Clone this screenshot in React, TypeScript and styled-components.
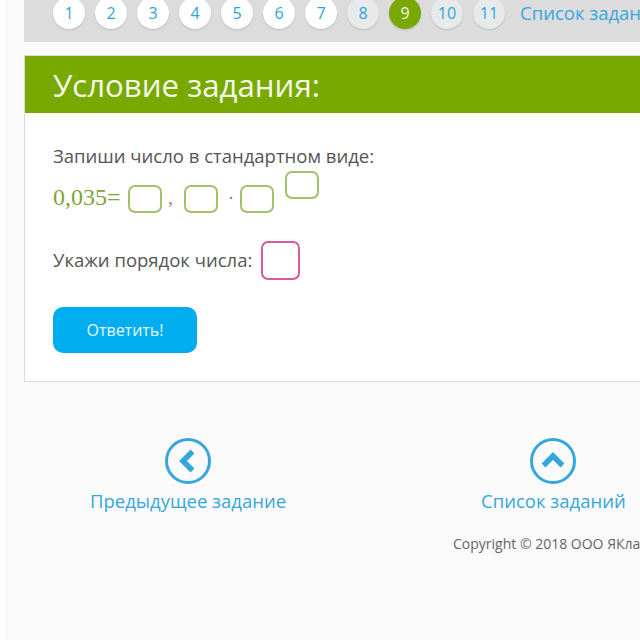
import React from "react";
import styled, { createGlobalStyle } from "styled-components";

const GlobalStyle = createGlobalStyle`
  html, body {
    margin: 0;
    padding: 0;
    width: 640px;
    height: 640px;
    overflow: hidden;
    background: #fff;
    font-family: "Open Sans", "Liberation Sans", sans-serif;
  }
`;

const Page = styled.div`
  width: 635px;
  height: 640px;
  margin-left: 5px;
  padding-left: 19px;
  box-sizing: border-box;
  background: #fafafa;
  overflow: hidden;
`;

const NavBar = styled.div`
  display: flex;
  align-items: flex-start;
  gap: 10px;
  width: 800px;
  height: 42px;
  padding: 0 0 0 29px;
  margin-bottom: 13px;
  box-sizing: border-box;
  background: #dcdcdc;
`;

const Bubble = styled.div<{ $state?: "done" | "todo" | "active" }>`
  flex: none;
  display: flex;
  align-items: center;
  justify-content: center;
  width: 32px;
  height: 32px;
  margin-top: -3px;
  border-radius: 50%;
  font-size: 16px;
  box-shadow: 0 1px 2px rgba(0, 0, 0, 0.15);
  color: ${(p) => (p.$state === "active" ? "#f1f6e2" : "#2ba6dc")};
  background: ${(p) =>
    p.$state === "active" ? "#78a900" : p.$state === "todo" ? "#e8e9ea" : "#fff"};
`;

const ListLink = styled.a`
  flex: none;
  margin-left: 5px;
  font-size: 18.5px;
  line-height: 25px;
  color: #36a7dc;
`;

const Card = styled.section`
  width: 800px;
  height: 327px;
  box-sizing: border-box;
  border: 1px solid #dcdcdc;
  background: #fff;
`;

const CardHeader = styled.h1`
  margin: 0;
  height: 57px;
  padding-left: 28px;
  background: #78a900;
  color: #f6f9ea;
  font-size: 31.2px;
  font-weight: 400;
  line-height: 58px;
`;

const CardBody = styled.div`
  padding: 30px 28px 0;
`;

const Prompt = styled.p`
  margin: 0;
  font-size: 18.5px;
  line-height: 26px;
  color: #555;
`;

const MathRow = styled.div`
  display: flex;
  align-items: flex-start;
  height: 56px;
  margin-top: 2px;
  box-sizing: border-box;
  font-family: "Liberation Serif", serif;
  font-size: 24px;
  color: #7aa63a;
`;

const MathText = styled.span`
  margin-top: 11px;
  line-height: 30px;
`;

const MathSign = styled.span<{ $padLeft?: number; $padRight?: number }>`
  width: 22px;
  box-sizing: border-box;
  padding-left: ${(p) => p.$padLeft ?? 0}px;
  padding-right: ${(p) => p.$padRight ?? 0}px;
  margin-top: 15px;
  text-align: center;
  font-size: 18px;
  line-height: 24px;
  color: #777;
`;

const GreenBox = styled.div<{ $raised?: boolean; $first?: boolean }>`
  flex: none;
  width: 34px;
  height: 28px;
  margin-top: ${(p) => (p.$raised ? 0 : 14)}px;
  margin-left: ${(p) => (p.$raised ? 11 : p.$first ? 7 : 0)}px;
  box-sizing: border-box;
  border: 2px solid #a3c16c;
  border-radius: 7px;
  background: #fff;
`;

const OrderRow = styled.div`
  display: flex;
  align-items: center;
  gap: 9px;
  height: 38px;
  margin-top: 14px;
`;

const PinkBox = styled.div`
  flex: none;
  width: 39px;
  height: 39px;
  box-sizing: border-box;
  border: 2px solid #d9589f;
  border-radius: 7px;
  background: #fff;
`;

const AnswerButton = styled.button`
  display: block;
  width: 144px;
  height: 46px;
  margin-top: 28px;
  padding: 0;
  border: none;
  border-radius: 10px;
  background: #00aeef;
  color: #e8f7fd;
  font-family: inherit;
  font-size: 16px;
`;

const BottomNav = styled.nav`
  display: flex;
  gap: 195px;
  margin-top: 56px;
  padding-left: 66px;
`;

const NavItem = styled.a`
  display: flex;
  flex-direction: column;
  align-items: center;
  gap: 4px;
  color: #36a7dc;
  font-size: 18.5px;
  line-height: 25px;
  white-space: nowrap;
`;

const Copyright = styled.p`
  margin: 21px 0 0 429px;
  width: 400px;
  font-size: 14px;
  line-height: 20px;
  color: #666;
  white-space: nowrap;
`;

const RoundIcon = ({ d }: { d: string }) => (
  <svg width="46" height="46" viewBox="0 0 46 46" fill="none">
    <circle cx="23" cy="23" r="21.5" stroke="#36a7dc" strokeWidth="3" />
    <path d={d} stroke="#36a7dc" strokeWidth="5.5" />
  </svg>
);

const bubbles = [1, 2, 3, 4, 5, 6, 7, 8, 9, 10, 11];

export default function App() {
  return (
    <>
      <GlobalStyle />
      <Page>
        <NavBar>
          {bubbles.map((n) => (
            <Bubble key={n} $state={n === 9 ? "active" : n > 7 ? "todo" : "done"}>
              {n}
            </Bubble>
          ))}
          <ListLink>Список заданий</ListLink>
        </NavBar>
        <Card>
          <CardHeader>Условие задания:</CardHeader>
          <CardBody>
            <Prompt>Запиши число в стандартном виде:</Prompt>
            <MathRow>
              <MathText>0,035=</MathText>
              <GreenBox $first />
              <MathSign $padRight={4}>,</MathSign>
              <GreenBox />
              <MathSign $padLeft={5}>·</MathSign>
              <GreenBox />
              <GreenBox $raised />
            </MathRow>
            <OrderRow>
              <Prompt>Укажи порядок числа:</Prompt>
              <PinkBox />
            </OrderRow>
            <AnswerButton>Ответить!</AnswerButton>
          </CardBody>
        </Card>
        <BottomNav>
          <NavItem>
            <RoundIcon d="M27.5 13.5 18 23l9.5 9.5" />
            Предыдущее задание
          </NavItem>
          <NavItem>
            <RoundIcon d="M13.5 27.5 23 18l9.5 9.5" />
            Список заданий
          </NavItem>
        </BottomNav>
        <Copyright>Copyright © 2018 ООО ЯКласс</Copyright>
      </Page>
    </>
  );
}
